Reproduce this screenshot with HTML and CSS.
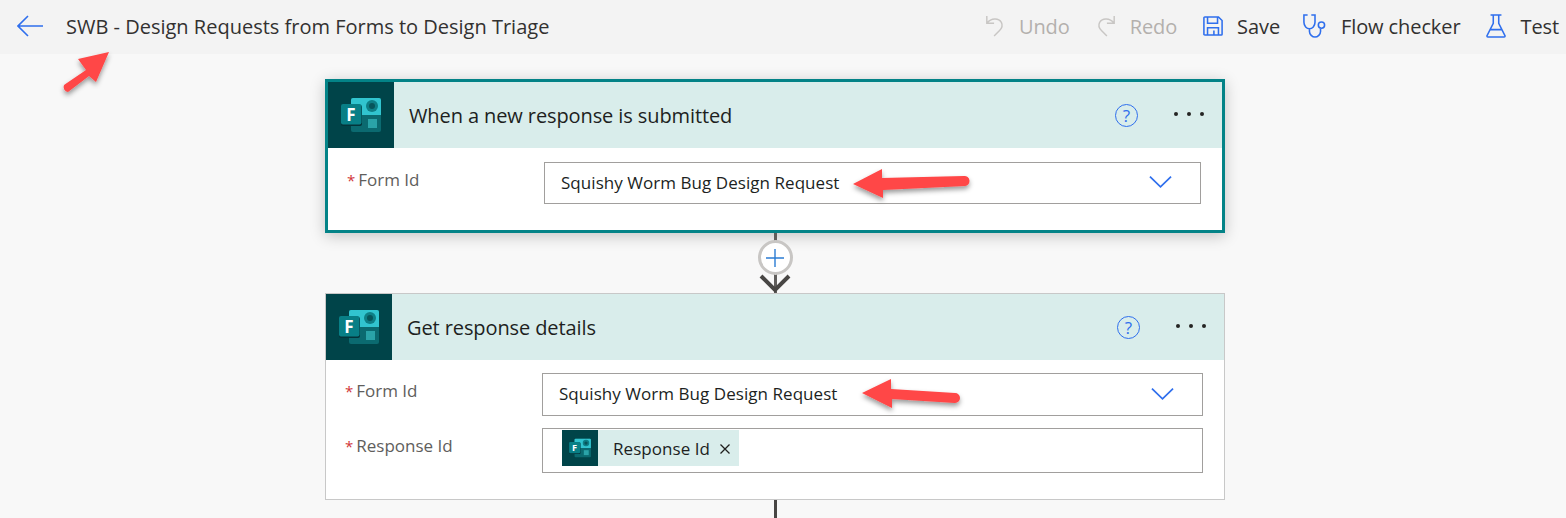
FILE: index.html
```html
<!DOCTYPE html>
<html>
<head>
    <meta charset="utf-8">
    <title>SWB - Design Requests from Forms to Design Triage</title>
    <link rel="stylesheet" href="styles.css">
</head>
<body>
    <svg class="defs" width="0" height="0">
        <symbol id="forms" viewBox="0 0 66 66">
            <rect x="23" y="16" width="30" height="34" rx="2" fill="#0b6a70"/>
            <path d="M25 16h26a2 2 0 0 1 2 2v15H23V18a2 2 0 0 1 2-2z" fill="#31c4cf"/>
            <circle cx="44" cy="24" r="6" fill="#0e7f86"/>
            <circle cx="44" cy="24" r="3" fill="#07555b"/>
            <rect x="40" y="37" width="9" height="9" fill="#2aa3a8"/>
            <rect x="13" y="23" width="21" height="21" rx="2" fill="#04343a"/>
            <rect x="13" y="22" width="20.500" height="20.500" rx="2" fill="#087f86"/>
            <text x="23" y="38.500" class="forms-f">F</text>
        </symbol>
    </svg>

    <header class="topbar">
        <svg class="back" width="26" height="22" viewBox="0 0 26 22">
            <path d="M26 11H1M11 1 1 11l10 10" fill="none" stroke="#2f6fed" stroke-width="1.6"/>
        </svg>
        <div class="flow-name">SWB - Design Requests from Forms to Design Triage</div>
        <nav class="actions">
            <span class="action disabled">
                <svg width="20" height="24" viewBox="0 0 22 26"><path d="M2 2v8h8M2 10c5-6 13-6 16-1 2 4 0 7-2 9l-6 6" fill="none" stroke="#c8c6c4" stroke-width="1.6"/></svg>
                Undo
            </span>
            <span class="action disabled">
                <svg width="20" height="24" viewBox="0 0 22 26"><path d="M20 2v8h-8M20 10c-5-6-13-6-16-1-2 4 0 7 2 9l6 6" fill="none" stroke="#c8c6c4" stroke-width="1.6"/></svg>
                Redo
            </span>
            <span class="action">
                <svg width="20" height="20" viewBox="0 0 22 22"><path d="M2 1h15l4 4v15a1 1 0 0 1-1 1H2a1 1 0 0 1-1-1V2a1 1 0 0 1 1-1zM5 1v7h11V1M5 21v-8h12v8M12 16v5" fill="none" stroke="#2f6fed" stroke-width="1.7"/></svg>
                Save
            </span>
            <span class="action checker">
                <svg width="24" height="24" viewBox="0 0 26 26"><path d="M5 1H1v8c0 4 3 7 6 7s6-3 6-7V1H9M7 16v3c0 3 3 6 6 6s6-3 6-6v-3" fill="none" stroke="#2f6fed" stroke-width="1.7"/><circle cx="20" cy="12" r="3.4" fill="none" stroke="#2f6fed" stroke-width="1.7"/></svg>
                Flow checker
            </span>
            <span class="action">
                <svg width="20" height="24" viewBox="0 0 22 26"><path d="M5 1h12M8 1v9L1 24a1 1 0 0 0 1 1h18a1 1 0 0 0 1-1L14 10V1M5 17h12" fill="none" stroke="#2f6fed" stroke-width="1.7"/></svg>
                Test
            </span>
        </nav>
    </header>

    <main class="canvas">
        <section class="card selected">
            <div class="card-head">
                <svg class="tile"><use href="#forms"/></svg>
                <div class="card-title">When a new response is submitted</div>
                <span class="help">?</span>
                <span class="more"><i></i><i></i><i></i></span>
            </div>
            <div class="card-body">
                <div class="field">
                    <label class="field-label"><b>*</b>Form Id</label>
                    <div class="input">
                        <span>Squishy Worm Bug Design Request</span>
                        <svg class="chevron" width="23" height="14" viewBox="0 0 24 14"><path d="M1 1.500 12 12 23 1.500" fill="none" stroke="#2f6fed" stroke-width="1.800"/></svg>
                    </div>
                </div>
            </div>
        </section>

        <div class="connector">
            <span class="add">
                <svg width="18" height="18" viewBox="0 0 18 18"><path d="M0 9h18M9 0v18" stroke="#2b7cd3" stroke-width="1.400"/></svg>
            </span>
            <svg class="arrowhead" width="32" height="20" viewBox="0 0 32 20"><path d="M2 3l14 14L30 3" fill="none" stroke="#484644" stroke-width="4"/></svg>
        </div>

        <section class="card">
            <div class="card-head">
                <svg class="tile"><use href="#forms"/></svg>
                <div class="card-title">Get response details</div>
                <span class="help">?</span>
                <span class="more"><i></i><i></i><i></i></span>
            </div>
            <div class="card-body">
                <div class="field">
                    <label class="field-label"><b>*</b>Form Id</label>
                    <div class="input">
                        <span>Squishy Worm Bug Design Request</span>
                        <svg class="chevron" width="23" height="14" viewBox="0 0 24 14"><path d="M1 1.500 12 12 23 1.500" fill="none" stroke="#2f6fed" stroke-width="1.800"/></svg>
                    </div>
                </div>
                <div class="field">
                    <label class="field-label"><b>*</b>Response Id</label>
                    <div class="input tall">
                        <span class="chip">
                            <svg class="chip-tile"><use href="#forms"/></svg>
                            <span class="chip-text">Response Id</span>
                            <svg class="chip-x" width="10" height="10" viewBox="0 0 10 10"><path d="M.5.500l9 9M9.500.500l-9 9" stroke="#201f1e" stroke-width="1.300"/></svg>
                        </span>
                    </div>
                </div>
            </div>
        </section>
        <div class="tail"></div>
    </main>

    <!-- red annotation arrows sit over the screenshot -->
    <svg class="notes" width="1566" height="518" viewBox="0 0 1566 518">
        <defs>
            <filter id="drop" x="-30%" y="-30%" width="160%" height="180%">
                <feDropShadow dx="0" dy="3" stdDeviation="2.500" flood-color="#000" flood-opacity=".4"/>
            </filter>
        </defs>
        <g fill="#ff4646" filter="url(#drop)">
            <path d="M109 52 78 59 86 70 64 85a5 5 0 0 0 4 7L89 76 96 82z"/>
            <path d="M853 184 882 169 882 178 964 176a5 5 0 0 1 1 10L883 190 883 198z"/>
            <path d="M862 393 891 379 891 389 955 393a5 5 0 0 1 0 10L892 399 892 408z"/>
        </g>
    </svg>
</body>
</html>
```
FILE: styles.css
```css
* {
    box-sizing: border-box;
}
html, body {
    margin: 0;
    height: 518px;
    overflow: hidden;
}
body {
    position: relative;
    font-family: "Open Sans", "Noto Sans", sans-serif;
    color: #252423;
    background-color: #f8f8f8;
}
.defs {
    display: none;
}
.forms-f {
    font-family: "Open Sans", sans-serif;
    font-size: 17px;
    font-weight: 700;
    fill: white;
    text-anchor: middle;
}
.topbar {
    display: flex;
    align-items: center;
    height: 54px;
    padding: 0 7px 2px 17px;
    background-color: #f3f3f3;
}
.flow-name {
    margin-left: 23px;
    font-size: 20px;
    color: #323130;
}
.actions {
    display: flex;
    align-items: center;
    gap: 26px;
    margin-left: auto;
}
.action {
    display: flex;
    align-items: center;
    gap: 14px;
    font-size: 20px;
    letter-spacing: -0.1px;
    color: #323130;
}
.action.disabled {
    color: #b3b0ad;
}
.action.checker {
    margin-left: -3px;
}
.canvas {
    display: flex;
    flex-direction: column;
    align-items: center;
    padding: 25px 16px 0 0;
}
.card {
    width: 900px;
    height: 207px;
    border: 1px solid #c8c8c8;
    background: white;
}
.card.selected {
    height: 154px;
    border: 3px solid #038387;
    box-shadow: 0 3px 14px rgba(0,0,0,0.22);
}
.card-head {
    display: flex;
    align-items: center;
    height: 66px;
    background-color: #d9edeb;
}
.tile {
    width: 66px;
    height: 66px;
    background-color: #004449;
    flex-shrink: 0;
}
.card-title {
    flex: 1;
    margin-left: 15px;
    font-size: 20px;
    letter-spacing: -0.1px;
    color: #201f1e;
}
.help {
    display: flex;
    align-items: center;
    justify-content: center;
    width: 23px;
    height: 23px;
    border: 1.500px solid #2f6fed;
    border-radius: 50%;
    font-size: 17px;
    color: #2f6fed;
}
.more {
    display: flex;
    gap: 9px;
    margin: 0 18px 2px 36px;
}
.more i {
    width: 4px;
    height: 4px;
    border-radius: 50%;
    background-color: #252423;
}
.card-body {
    display: flex;
    flex-direction: column;
    gap: 12px;
    padding: 13px 21px 0 19px;
}
.selected .card-body {
    padding-top: 14px;
}
.field {
    display: flex;
}
.field-label {
    width: 197px;
    padding-top: 6px;
    font-size: 17px;
    color: #605e5c;
}
.field-label b {
    margin-right: 3px;
    font-weight: 400;
    font-size: 15px;
    color: #d13438;
}
.input {
    display: flex;
    align-items: center;
    justify-content: space-between;
    flex: 1;
    height: 43px;
    padding: 0 28px 2px 16px;
    border: 1px solid #a19f9d;
    font-size: 17px;
    letter-spacing: 0.05px;
    color: #201f1e;
}
.selected .input {
    height: 42px;
}
.input.tall {
    align-items: flex-start;
    height: 45px;
    padding: 1px 0 0 19px;
}
.chip {
    display: flex;
    align-items: center;
    height: 36px;
    background-color: #d9edeb;
}
.chip-tile {
    width: 36px;
    height: 36px;
    background-color: #004449;
}
.chip-text {
    margin: 0 10px 0 15px;
}
.chip-x {
    margin: 2px 9px 0 0;
}
.connector {
    position: relative;
    width: 3px;
    height: 60px;
    background-color: #605e5c;
}
.add {
    position: absolute;
    top: 7px;
    left: -16px;
    display: flex;
    align-items: center;
    justify-content: center;
    width: 35px;
    height: 35px;
    border: 3px solid #c8c6c4;
    border-radius: 50%;
    background: white;
}
.arrowhead {
    position: absolute;
    bottom: 0;
    left: -15px;
}
.tail {
    width: 3px;
    height: 20px;
    background-color: #484644;
}
.notes {
    position: absolute;
    top: 0;
    left: 0;
}
```
